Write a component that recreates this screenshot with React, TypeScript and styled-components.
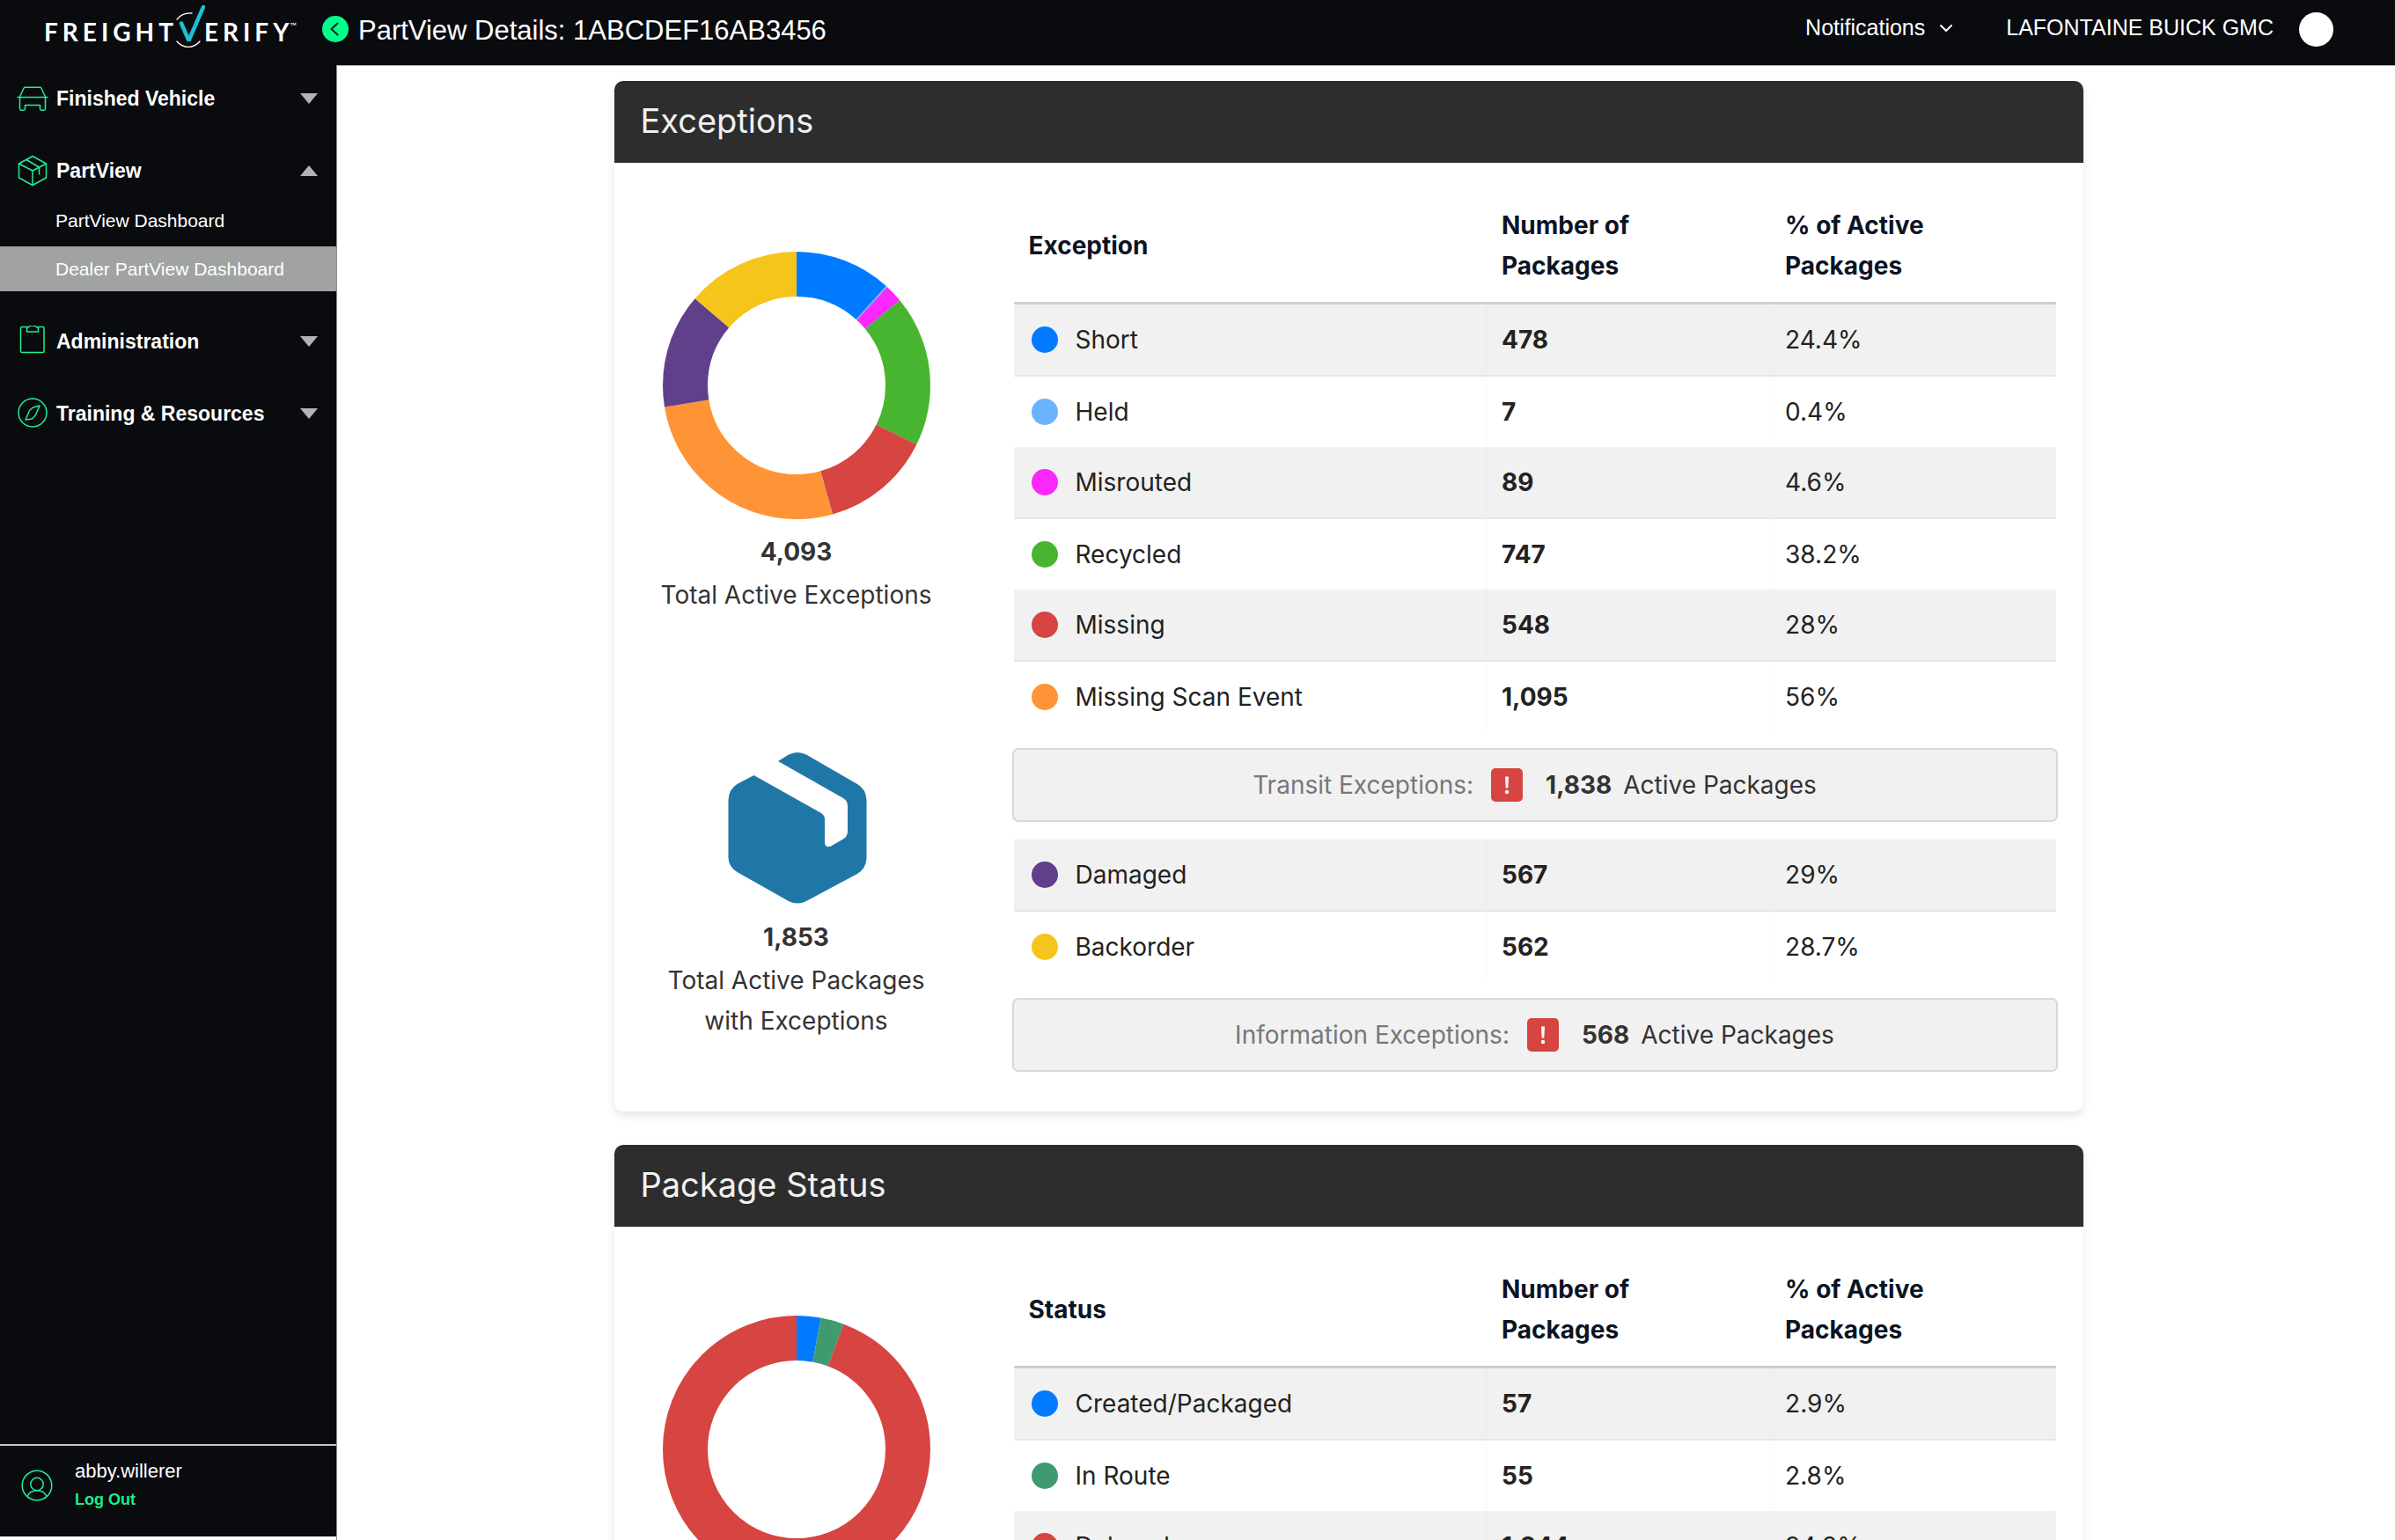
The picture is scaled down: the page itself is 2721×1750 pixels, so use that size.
import React from "react";
import styled, { createGlobalStyle } from "styled-components";

const ink = "#0a0b0f";
const mint = "#00ff8c";
const navFont = `"Liberation Sans", Arial, sans-serif`;
const bodyFont = `Inter, "Open Sans", sans-serif`;

const GlobalStyle = createGlobalStyle`
  *, *::before, *::after { box-sizing: border-box; }
  html, body, #root { height: 100%; }
  body { margin: 0; background: #fff; font-family: ${bodyFont}; }
  button { font: inherit; color: inherit; background: none; border: 0; padding: 0; cursor: pointer; }
  a { color: inherit; text-decoration: none; }
  ul { list-style: none; margin: 0; padding: 0; }
  h1, h2, p { margin: 0; font-weight: 400; }
`;

const Shell = styled.div`
  display: flex;
  flex-direction: column;
  height: 100vh;
  overflow: hidden;
`;

const TopBar = styled.header`
  display: flex;
  align-items: center;
  flex: none;
  height: 74px;
  padding: 0 70px 8px 50px;
  background: ${ink};
  color: #fff;
  font-family: ${navFont};
`;

const Logo = styled.a`
  display: flex;
  align-items: center;
  width: 316px;
  height: 66px;
`;

const Wordmark = styled.span`
  font-family: Lato, sans-serif;
  font-weight: 700;
  font-size: 28px;
  line-height: 34px;
  letter-spacing: 5px;
  padding-top: 6px;
`;

const Trademark = styled.sup`
  align-self: flex-start;
  font-family: Lato, sans-serif;
  font-size: 10px;
  line-height: 10px;
  padding-top: 24px;
  margin-left: -4px;
`;

const CheckMark = styled.svg`
  flex: none;
  width: 36px;
  height: 66px;
  margin: 0 -1px 0 -5px;
`;

const BackButton = styled.button`
  display: flex;
  align-items: center;
  justify-content: center;
  width: 30px;
  height: 30px;
  border-radius: 50%;
  background: ${mint};
`;

const PageTitle = styled.h1`
  flex: 1;
  margin-left: 11px;
  padding-top: 3px;
  font-size: 31px;
  line-height: 36px;
`;

const TopActions = styled.div`
  display: flex;
  align-items: center;
  font-size: 25px;
  line-height: 30px;
`;

const NotificationsButton = styled.button`
  display: flex;
  align-items: center;
  gap: 16px;
  margin-right: 60px;
  padding-bottom: 4px;
`;

const Dealer = styled.span`
  padding-bottom: 4px;
`;

const Avatar = styled.button`
  width: 39px;
  height: 39px;
  margin-left: 29px;
  border-radius: 50%;
  background: #fff;
`;

const Columns = styled.div`
  display: flex;
  flex: 1;
  min-height: 0;
`;

const Sidebar = styled.aside`
  display: flex;
  flex-direction: column;
  flex: none;
  width: 382px;
  margin-bottom: 4px;
  background: ${ink};
  color: #fff;
  font-family: ${navFont};
`;

const Nav = styled.nav`
  display: flex;
  flex-direction: column;
  flex: 1;
  gap: 32px;
  padding-top: 13px;
`;

const NavButton = styled.button`
  display: flex;
  align-items: center;
  width: 100%;
  height: 50px;
  padding: 0 21px 0 19px;
  font-size: 23px;
  font-weight: 700;
  text-align: left;
`;

const NavIcon = styled.svg`
  flex: none;
  width: 36px;
  height: 36px;
  margin-right: 9px;
  fill: none;
  stroke: #1ff092;
  stroke-width: 1.5;
  stroke-linejoin: round;
  stroke-linecap: round;
`;

const NavLabel = styled.span`
  flex: 1;
`;

const Caret = styled.span<{ $open?: boolean }>`
  width: 20px;
  height: 12px;
  background: #b3b3b5;
  clip-path: ${(p) =>
    p.$open ? "polygon(50% 0, 100% 100%, 0 100%)" : "polygon(0 0, 100% 0, 50% 100%)"};
`;

const SubList = styled.ul`
  display: flex;
  flex-direction: column;
  gap: 4px;
  margin-top: 6px;
`;

const SubLink = styled.a<{ $active?: boolean }>`
  display: block;
  padding-left: 63px;
  font-size: 21px;
  line-height: 51px;
  background: ${(p) => (p.$active ? "#a0a3a1" : "transparent")};
`;

const Account = styled.div`
  display: flex;
  align-items: center;
  gap: 25px;
  padding: 13px 24px 26px;
  border-top: 2px solid #c4c5c7;
  font-size: 22px;
  line-height: 32px;
`;

const AccountIcon = styled(NavIcon)`
  margin-right: 0;
`;

const LogOut = styled.button`
  display: block;
  font-size: 18px;
  font-weight: 700;
  line-height: 32px;
  color: #17f08a;
`;

const Main = styled.main`
  flex: 1;
  min-width: 0;
  overflow-y: auto;
  scrollbar-width: none;
  padding: 17px 40px 0 0;
  border-top: 1px solid #b5b6b8;
  border-left: 1px solid #8a8b8d;
`;

const Stack = styled.div`
  display: flex;
  flex-direction: column;
  gap: 38px;
  max-width: 1669px;
  margin: 0 auto;
`;

const Card = styled.section`
  border-radius: 10px;
  background: #fff;
  box-shadow: 0 5px 10px rgba(0, 0, 0, 0.1);
`;

const CardTitle = styled.h2`
  padding: 0 30px 2px;
  border-radius: 10px 10px 0 0;
  background: #2d2d2d;
  color: #f1f1f1;
  font-size: 38px;
  line-height: 91px;
`;

const CardBody = styled.div`
  display: grid;
  grid-template-columns: 414px 1fr;
  column-gap: 38px;
  padding: 0 29px 45px 0;
`;

const Summary = styled.div`
  display: flex;
  flex-direction: column;
  align-items: center;
  padding-top: 101px;
`;

const Figure = styled.div`
  display: flex;
  flex-direction: column;
  align-items: center;
  gap: 3px;
  text-align: center;
  font-size: 28px;
  line-height: 46px;
  color: #333;

  & + & {
    margin-top: 155px;
  }

  strong {
    margin-top: 11px;
  }
`;

const DonutSvg = styled.svg`
  width: 304px;
  height: 304px;
`;

const PackageSvg = styled.svg`
  width: 160px;
  height: 174px;
`;

const TableArea = styled.div`
  padding-top: 28px;
`;

const Table = styled.table`
  width: calc(100% - 4px);
  margin: 0 2px;
  table-layout: fixed;
  border-collapse: separate;
  border-spacing: 0;
  font-size: 28px;
  line-height: 46px;
  color: #222;
  text-align: left;
`;

const HeadCell = styled.th<{ $width: string }>`
  width: ${(p) => p.$width};
  height: 133px;
  padding: 20px 100px 18px 17px;
  border-bottom: 3px solid #cfcfcf;
  color: #0b1424;
  font-weight: 700;
`;

const Row = styled.tr`
  height: 80px;

  &:nth-child(odd) {
    height: 82px;
    background: #f1f1f1;
  }

  &:nth-child(odd) > * {
    border-bottom: 2px solid #e6e6e6;
  }
`;

const NameCell = styled.th<{ $width: string }>`
  width: ${(p) => p.$width};
  padding: 0 20px;
  font-weight: 400;
`;

const Cell = styled.td<{ $strong?: boolean; $width: string }>`
  width: ${(p) => p.$width};
  padding: 0 16px;
  border-left: 1px solid rgba(0, 0, 0, 0.02);
  font-weight: ${(p) => (p.$strong ? 700 : 400)};
`;

const NameWrap = styled.span`
  display: flex;
  align-items: center;
  gap: 20px;
`;

const Dot = styled.span<{ $color: string }>`
  width: 30px;
  height: 30px;
  border-radius: 50%;
  background: ${(p) => p.$color};
`;

const Total = styled.div`
  display: flex;
  align-items: center;
  justify-content: center;
  height: 84px;
  margin: 18px 0 20px;
  border: 2px solid #d9d9d9;
  border-radius: 7px;
  background: #f1f1f1;
  font-size: 28px;
  color: #333;

  &:last-child {
    margin-bottom: 0;
  }
`;

const TotalLabel = styled.span`
  color: #74787b;
`;

const Alert = styled.svg`
  width: 36px;
  height: 38px;
  margin: 0 26px 0 20px;
`;

const TotalCount = styled.strong`
  margin-right: 13px;
`;

type Entry = { name: string; count: number; share: string; color: string };

const transit: Entry[] = [
  { name: "Short", count: 478, share: "24.4%", color: "#007bff" },
  { name: "Held", count: 7, share: "0.4%", color: "#69b3ff" },
  { name: "Misrouted", count: 89, share: "4.6%", color: "#fb27fb" },
  { name: "Recycled", count: 747, share: "38.2%", color: "#48b531" },
  { name: "Missing", count: 548, share: "28%", color: "#d64541" },
  { name: "Missing Scan Event", count: 1095, share: "56%", color: "#ff9436" },
];

const information: Entry[] = [
  { name: "Damaged", count: 567, share: "29%", color: "#603f8b" },
  { name: "Backorder", count: 562, share: "28.7%", color: "#f6c51b" },
];

const statuses: Entry[] = [
  { name: "Created/Packaged", count: 57, share: "2.9%", color: "#007bff" },
  { name: "In Route", count: 55, share: "2.8%", color: "#3f9a70" },
  { name: "Delayed", count: 1844, share: "94.3%", color: "#d64541" },
];

const widths = ["45.4%", "27.2%", "27.4%"];

function Donut({ data, label }: { data: Entry[]; label: string }) {
  const total = data.reduce((sum, d) => sum + d.count, 0);
  let before = 0;
  return (
    <DonutSvg viewBox="0 0 304 304" role="img" aria-label={label}>
      <g transform="rotate(-90 152 152)" fill="none" strokeWidth="51">
        {data.map((d) => {
          const offset = -before;
          before += d.count;
          return (
            <circle
              key={d.name}
              cx="152"
              cy="152"
              r="126.5"
              pathLength={total}
              stroke={d.color}
              strokeDasharray={`${d.count} ${total - d.count}`}
              strokeDashoffset={offset}
            />
          );
        })}
      </g>
    </DonutSvg>
  );
}

function BreakdownTable({ heading, data }: { heading?: string; data: Entry[] }) {
  return (
    <Table>
      {heading && (
        <thead>
          <tr>
            <HeadCell $width={widths[0]} scope="col">{heading}</HeadCell>
            <HeadCell $width={widths[1]} scope="col">Number of Packages</HeadCell>
            <HeadCell $width={widths[2]} scope="col">% of Active Packages</HeadCell>
          </tr>
        </thead>
      )}
      <tbody>
        {data.map((d) => (
          <Row key={d.name}>
            <NameCell $width={widths[0]} scope="row">
              <NameWrap>
                <Dot $color={d.color} />
                {d.name}
              </NameWrap>
            </NameCell>
            <Cell $width={widths[1]} $strong>{d.count.toLocaleString("en-US")}</Cell>
            <Cell $width={widths[2]}>{d.share}</Cell>
          </Row>
        ))}
      </tbody>
    </Table>
  );
}

function TotalBox({ label, count }: { label: string; count: string }) {
  return (
    <Total>
      <TotalLabel>{label}</TotalLabel>
      <Alert viewBox="0 0 36 38" aria-hidden="true">
        <rect width="36" height="38" rx="5" fill="#d64541" />
        <path d="M16 9.5h4l-.7 13h-2.6z" fill="#fff" />
        <circle cx="18" cy="27" r="2.2" fill="#fff" />
      </Alert>
      <TotalCount>{count}</TotalCount>
      <span>Active Packages</span>
    </Total>
  );
}

export default function App() {
  return (
    <Shell>
      <GlobalStyle />
      <TopBar>
        <Logo href="#" aria-label="FreightVerify">
          <Wordmark>FREIGHT</Wordmark>
          <CheckMark viewBox="0 0 36 66" fill="none" strokeLinecap="round" aria-hidden="true">
            <path d="M4 22c4-5 9-7.500 17-7" stroke="#fff" strokeWidth="1.300" />
            <path d="M4 47c7 8.500 19 8.500 26 0" stroke="#fff" strokeWidth="1.300" />
            <path d="M9 26.500L17.500 46L34 8" stroke="#1cc1d6" strokeWidth="4.500" strokeLinejoin="bevel" />
          </CheckMark>
          <Wordmark>ERIFY</Wordmark>
          <Trademark>™</Trademark>
        </Logo>
        <BackButton aria-label="Back">
          <svg width="30" height="30" viewBox="0 0 30 30" fill="none" stroke="#10281d" strokeWidth="2">
            <path d="M17.500 8.500L10.500 15l7 6.500" strokeLinecap="round" strokeLinejoin="round" />
          </svg>
        </BackButton>
        <PageTitle>PartView Details: 1ABCDEF16AB3456</PageTitle>
        <TopActions>
          <NotificationsButton>
            Notifications
            <svg width="16" height="12" viewBox="0 0 16 12" fill="none" stroke="#fff" strokeWidth="2">
              <path d="M2 4l6 6 6-6" strokeLinecap="round" strokeLinejoin="round" />
            </svg>
          </NotificationsButton>
          <Dealer>LAFONTAINE BUICK GMC</Dealer>
          <Avatar aria-label="Account" />
        </TopActions>
      </TopBar>

      <Columns>
        <Sidebar>
          <Nav>
            <NavButton aria-expanded={false}>
              <NavIcon viewBox="0 0 36 36">
                <path d="M3.500 16L8 6.300c.3-.6.800-1 1.500-1h17c.700 0 1.200.4 1.500 1L32.500 16" />
                <path d="M1 16.500h34" />
                <path d="M3.500 16.500V29.500c0 1 .7 1.700 1.700 1.700h2.600c1 0 1.700-.7 1.700-1.700v-4h17v4c0 1 .7 1.700 1.700 1.700h2.600c1 0 1.700-.7 1.700-1.700V16.500" />
              </NavIcon>
              <NavLabel>Finished Vehicle</NavLabel>
              <Caret />
            </NavButton>
            <div>
              <NavButton aria-expanded>
                <NavIcon viewBox="0 0 36 36">
                  <path d="M18 1.500L33.500 10v16L18 34.500 2.500 26V10z" />
                  <path d="M2.500 10L18 18l15.500-8M18 18v16.500" />
                  <path d="M11 5.500L25.500 14v8" />
                </NavIcon>
                <NavLabel>PartView</NavLabel>
                <Caret $open />
              </NavButton>
              <SubList>
                <li><SubLink href="#">PartView Dashboard</SubLink></li>
                <li><SubLink href="#" $active aria-current="page">Dealer PartView Dashboard</SubLink></li>
              </SubList>
            </div>
            <NavButton aria-expanded={false}>
              <NavIcon viewBox="0 0 36 36">
                <path d="M11.500 1.500H6c-.8 0-1.500.7-1.500 1.500v26c0 .8.700 1.500 1.500 1.500h23.500c.8 0 1.500-.7 1.500-1.500V3c0-.8-.7-1.500-1.500-1.500H24.500" />
                <path d="M11.500 7V4c0-1.500 1.200-2.500 2.500-2.500 1-2 7-2 8 0 1.300 0 2.500 1 2.500 2.500v3z" />
              </NavIcon>
              <NavLabel>Administration</NavLabel>
              <Caret />
            </NavButton>
            <NavButton aria-expanded={false}>
              <NavIcon viewBox="0 0 36 36">
                <circle cx="18" cy="17" r="16" />
                <path d="M26 9L21.500 19.500l-4 4.500L10 25l4.500-10.500 4-3.500z" />
              </NavIcon>
              <NavLabel>Training &amp; Resources</NavLabel>
              <Caret />
            </NavButton>
          </Nav>
          <Account>
            <AccountIcon viewBox="0 0 36 36">
              <circle cx="18" cy="18" r="16.800" />
              <circle cx="18" cy="16.500" r="7.200" />
              <path d="M7 30.500c2-4.500 6-6.800 11-6.800s9 2.300 11 6.800" />
            </AccountIcon>
            <div>
              <p>abby.willerer</p>
              <LogOut>Log Out</LogOut>
            </div>
          </Account>
        </Sidebar>

        <Main>
          <Stack>
            <Card>
              <CardTitle>Exceptions</CardTitle>
              <CardBody>
                <Summary>
                  <Figure>
                    <Donut data={[...transit, ...information]} label="Active exceptions by type" />
                    <strong>4,093</strong>
                    <span>Total Active Exceptions</span>
                  </Figure>
                  <Figure>
                    <PackageSvg viewBox="-2 0 160 174" fill="#1f77a8" aria-hidden="true">
                      <path d="M29.500 27L106 70q4 2.500 4 7v26q0 7 7 4.500l14-8q5-3 5-9V62q0-6-5-9L57 11l12-7.500q10-5 20 0l58 33.500q10 6 10.500 18v66q-.5 12-10.500 18L89 170q-10 5-20 0L10.500 137Q1 131 .5 121V55Q1 43 10.500 37z" />
                    </PackageSvg>
                    <strong>1,853</strong>
                    <span>
                      Total Active Packages
                      <br />
                      with Exceptions
                    </span>
                  </Figure>
                </Summary>
                <TableArea>
                  <BreakdownTable heading="Exception" data={transit} />
                  <TotalBox label="Transit Exceptions:" count="1,838" />
                  <BreakdownTable data={information} />
                  <TotalBox label="Information Exceptions:" count="568" />
                </TableArea>
              </CardBody>
            </Card>

            <Card>
              <CardTitle>Package Status</CardTitle>
              <CardBody>
                <Summary>
                  <Figure>
                    <Donut data={statuses} label="Active packages by status" />
                  </Figure>
                </Summary>
                <TableArea>
                  <BreakdownTable heading="Status" data={statuses} />
                </TableArea>
              </CardBody>
            </Card>
          </Stack>
        </Main>
      </Columns>
    </Shell>
  );
}
